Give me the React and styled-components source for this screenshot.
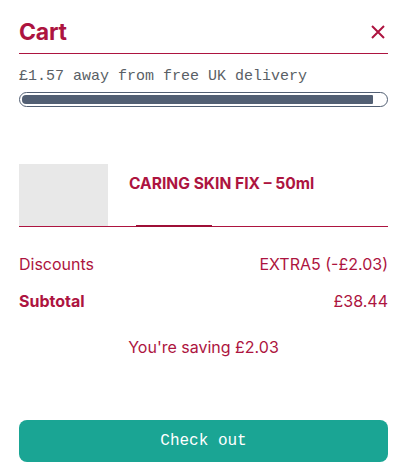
import React from 'react';
import styled, { createGlobalStyle } from 'styled-components';

const crimson = '#ad1440';
const slate = '#525f73';

const GlobalStyle = createGlobalStyle`
  html, body {
    margin: 0;
    padding: 0;
    background: #ffffff;
  }
  body {
    font-family: Inter, "Liberation Sans", sans-serif;
  }
  * {
    box-sizing: border-box;
  }
`;

const Drawer = styled.div`
  width: 411px;
  height: 464px;
  padding: 0 23px 0 19px;
  display: flex;
  flex-direction: column;
  overflow: hidden;
`;

const Header = styled.div`
  display: flex;
  justify-content: space-between;
  align-items: center;
  height: 54px;
  padding-top: 10px;
  border-bottom: 1px solid ${crimson};
`;

const Title = styled.h2`
  margin: 0;
  font-size: 23px;
  font-weight: 700;
  color: ${crimson};
  letter-spacing: -0.2px;
`;

const CloseButton = styled.button`
  border: none;
  background: none;
  padding: 0;
  width: 16px;
  height: 16px;
  margin-right: 2px;
  display: flex;
  align-items: center;
  justify-content: center;
  cursor: pointer;
`;

const Delivery = styled.p`
  margin: 14px 0 0;
  font-family: "Liberation Mono", "DejaVu Sans Mono", monospace;
  font-size: 15px;
  line-height: 18px;
  color: #5a5f66;
`;

const Track = styled.div`
  margin-top: 6px;
  height: 15px;
  border: 1.5px solid ${slate};
  border-radius: 8px;
  padding: 2px;
`;

const Fill = styled.div`
  height: 100%;
  background: ${slate};
  border-radius: 4px 1px 1px 4px;
`;

const Item = styled.div`
  margin-top: 57px;
  display: flex;
  gap: 21px;
  border-bottom: 1px solid ${crimson};
`;

const Thumb = styled.div`
  width: 89px;
  height: 62px;
  background: #e8e8e8;
`;

const Details = styled.div`
  flex: 1;
  display: flex;
  flex-direction: column;
  padding-top: 11px;
`;

const ItemName = styled.h3`
  margin: 0;
  font-size: 15.6px;
  font-weight: 700;
  color: ${crimson};
  line-height: 18px;
`;

const Qty = styled.div`
  margin-top: auto;
  margin-left: 7px;
  width: 76px;
  height: 2px;
  background: #9e0f36;
  margin-bottom: -1px;
`;

const Summary = styled.div`
  margin-top: 27px;
  display: flex;
  flex-direction: column;
  gap: 17px;
`;

const Row = styled.div`
  display: flex;
  justify-content: space-between;
  align-items: center;
  font-size: 16px;
  line-height: 20px;
  color: ${crimson};
`;

const Label = styled.span`
  font-weight: ${p => (p.$bold ? 700 : 400)};
`;

const Saving = styled.p`
  margin: 26px 0 0;
  text-align: center;
  font-size: 16px;
  line-height: 20px;
  color: ${crimson};
`;

const Checkout = styled.button`
  margin-top: 63px;
  height: 42px;
  width: 100%;
  border: none;
  border-radius: 8px;
  background: #1aa594;
  color: #ffffff;
  font-family: "Liberation Mono", "DejaVu Sans Mono", monospace;
  font-size: 16px;
  cursor: pointer;
`;

export default function App() {
  const progress = 96.8;
  return (
    <>
      <GlobalStyle />
      <Drawer>
        <Header>
          <Title>Cart</Title>
          <CloseButton aria-label="Close">
            <svg width="14" height="14" viewBox="0 0 14 14">
              <path d="M1 1L13 13M13 1L1 13" stroke={crimson} strokeWidth="2" />
            </svg>
          </CloseButton>
        </Header>
        <Delivery>£1.57 away from free UK delivery</Delivery>
        <Track>
          <Fill style={{ width: `${progress}%` }} />
        </Track>
        <Item>
          <Thumb />
          <Details>
            <ItemName>CARING SKIN FIX – 50ml</ItemName>
            <Qty />
          </Details>
        </Item>
        <Summary>
          <Row>
            <Label>Discounts</Label>
            <span>EXTRA5 (-£2.03)</span>
          </Row>
          <Row>
            <Label $bold>Subtotal</Label>
            <span>£38.44</span>
          </Row>
        </Summary>
        <Saving>You're saving £2.03</Saving>
        <Checkout>Check out</Checkout>
      </Drawer>
    </>
  );
}
